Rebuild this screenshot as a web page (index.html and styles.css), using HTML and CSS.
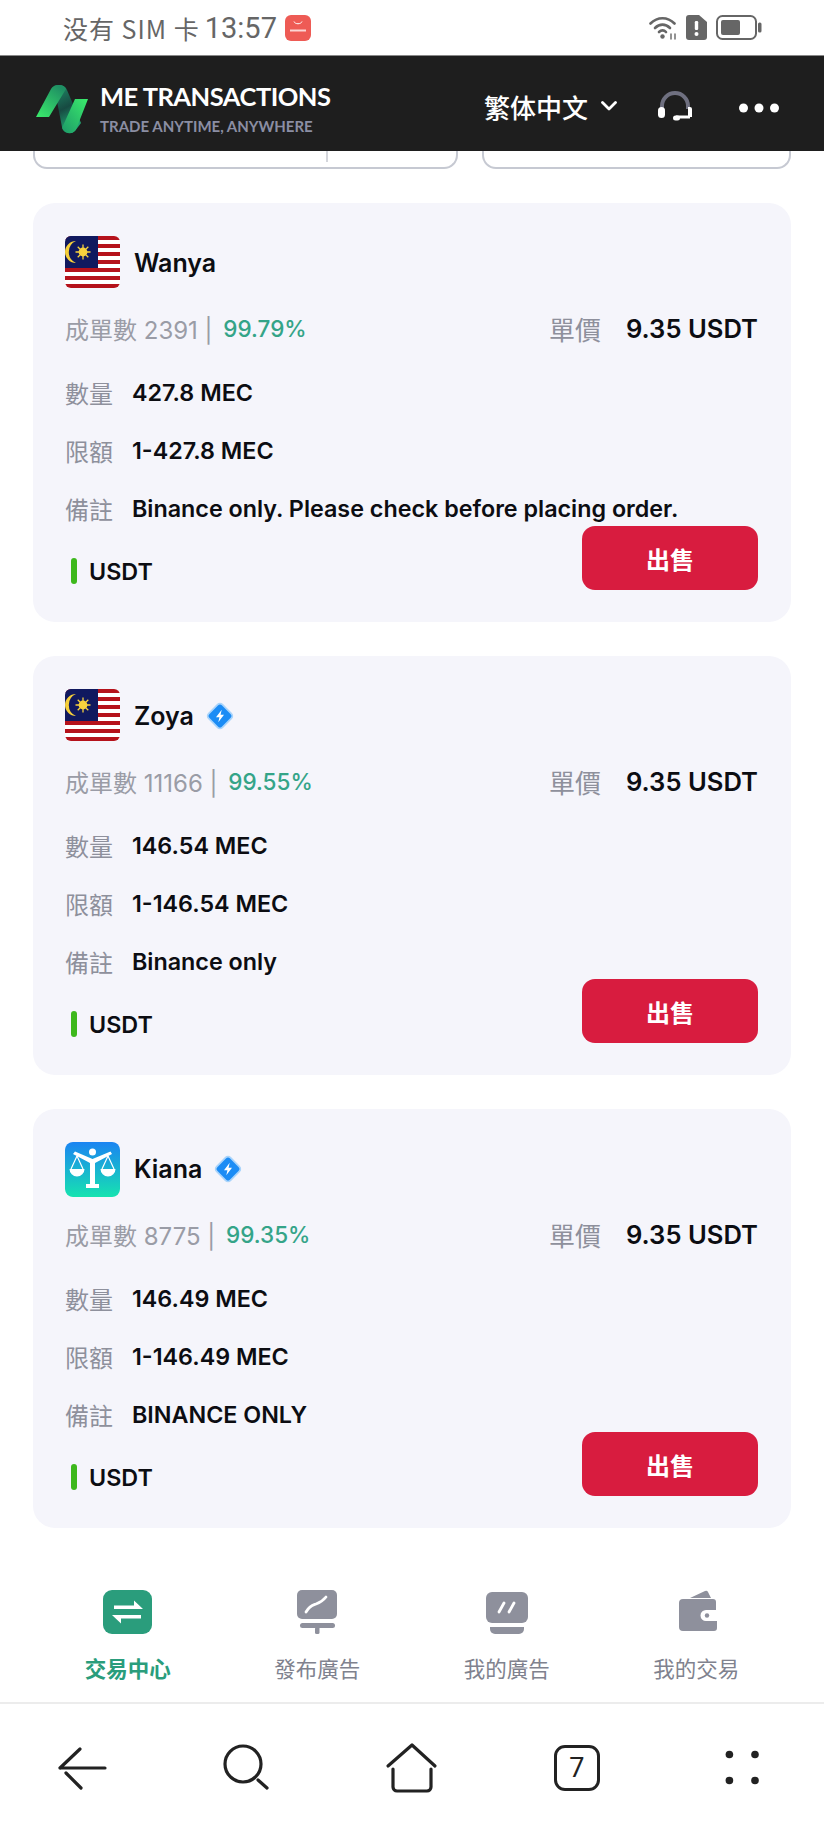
FILE: index.html
```html
<!DOCTYPE html>
<html lang="zh-Hant">
<head>
  <meta charset="UTF-8" />
  <meta name="viewport" content="width=device-width, initial-scale=1" />
  <title>ME Transactions</title>
  <link rel="stylesheet" href="styles.css">
</head>
<body>

  <!-- shared flag + badge -->
  <svg class="defs" aria-hidden="true">
    <symbol id="flag-my" viewBox="0 0 55 52">
      <rect width="55" height="52" fill="#fff"/>
      <g fill="#b5121b">
        <rect y="0" width="55" height="4"/>
        <rect y="8" width="55" height="4"/>
        <rect y="16" width="55" height="4"/>
        <rect y="24" width="55" height="4"/>
        <rect y="32" width="55" height="4"/>
        <rect y="40" width="55" height="4"/>
        <rect y="48" width="55" height="4"/>
      </g>
      <rect width="33" height="32" fill="#10195f"/>
      <path d="M11 5a11 11 0 1 0 0 22 12 12 0 0 1 0-22z" fill="#f5cf3a"/>
      <circle cx="18" cy="16" r="4.400" fill="#f7d23e"/>
      <path d="M18 8.500v15M10.500 16h15M12.700 10.700l10.600 10.600M23.300 10.700 12.700 21.300" stroke="#f7d23e" stroke-width="1.300"/>
    </symbol>
    <symbol id="badge" viewBox="0 0 28 28">
      <rect x="5.500" y="5.500" width="17" height="17" rx="3" transform="rotate(45 14 14)" fill="#1b8cf5" stroke="#a9d4fb" stroke-width="1.500"/>
      <path d="M15.500 8.500 10.500 15h3l-1 4.500 5-6.500h-3z" fill="#fff"/>
    </symbol>
  </svg>

  <div class="phone-status">
    <div class="status-left">
      <span class="carrier">没有 SIM 卡</span>
      <span class="clock">13:57</span>
      <svg class="store-icon" width="26" height="26" viewBox="0 0 26 26">
        <rect width="26" height="26" rx="6" fill="#ee5b55"/>
        <path d="M9 6.500c1 3 7 3 8 0" fill="none" stroke="#fff" stroke-width="1"/>
        <rect x="5" y="14.500" width="16" height="2" fill="#fbd5d3"/>
      </svg>
    </div>
    <div class="status-right">
      <svg width="28" height="26" viewBox="0 0 28 26" fill="none" stroke="#666" stroke-linecap="round">
        <path d="M1.500 8.500c7-7 17-7 24 0" stroke-width="2.600"/>
        <path d="M6 13c4.500-4.500 10.500-4.500 15 0" stroke-width="2.600"/>
        <path d="M10 17c2.200-2.200 5-2.200 7 0" stroke-width="2.600"/>
        <circle cx="13.500" cy="21.500" r="2.200" fill="#666" stroke="none"/>
        <path d="M22 19v5M26 19v5" stroke-width="1.400"/>
      </svg>
      <svg width="21" height="25" viewBox="0 0 21 25">
        <path d="M3 0h10l8 7v15a3 3 0 0 1-3 3H3a3 3 0 0 1-3-3V3a3 3 0 0 1 3-3z" fill="#666"/>
        <rect x="8.800" y="6" width="3.400" height="9" rx="1.200" fill="#fff"/>
        <circle cx="10.500" cy="19" r="2" fill="#fff"/>
      </svg>
      <svg width="46" height="25" viewBox="0 0 46 25">
        <rect x="1" y="1" width="39" height="23" rx="5.500" fill="none" stroke="#666" stroke-width="2"/>
        <rect x="5" y="5" width="19" height="15" rx="2" fill="#666"/>
        <rect x="42" y="7.500" width="3.500" height="10" rx="1.500" fill="#666"/>
      </svg>
    </div>
  </div>

  <header class="top-bar">
    <div class="brand">
      <svg width="52" height="50" viewBox="0 0 52 50">
        <defs>
          <linearGradient id="lg-a" x1="0" y1="1" x2="0.700" y2="0">
            <stop offset="0" stop-color="#3bec6c"/>
            <stop offset="1" stop-color="#1f8f63"/>
          </linearGradient>
          <linearGradient id="lg-b" x1="0" y1="0" x2="0.300" y2="1">
            <stop offset="0" stop-color="#1f8f68"/>
            <stop offset="0.550" stop-color="#174a42"/>
            <stop offset="1" stop-color="#22a873"/>
          </linearGradient>
          <linearGradient id="lg-c" x1="1" y1="0" x2="0" y2="1">
            <stop offset="0" stop-color="#3bec6c"/>
            <stop offset="1" stop-color="#1d9a68"/>
          </linearGradient>
        </defs>
        <path d="M18 2q2-1 5-1 6 0 8 5l14 33-6 8q-3 3-7 2-4-1-6-6z" fill="url(#lg-b)"/>
        <path d="M0 33 15 5q2-4 8-4 5 0 7 4L13 33z" fill="url(#lg-a)"/>
        <path d="M52 15 41 43q-2 6-8 6-4 0-6-3l-1-2 13-29z" fill="url(#lg-c)"/>
      </svg>
      <div class="brand-text">
        <div class="brand-name">ME TRANSACTIONS</div>
        <div class="brand-sub">TRADE ANYTIME, ANYWHERE</div>
      </div>
    </div>
    <div class="top-actions">
      <span class="lang">繁体中文</span>
      <svg class="chevron" width="16" height="10" viewBox="0 0 16 10" fill="none" stroke="#fff" stroke-width="2.800" stroke-linecap="round" stroke-linejoin="round"><path d="M1.500 1.500 8 8l6.500-6.500"/></svg>
      <svg class="headset" width="34" height="30" viewBox="0 0 34 30" fill="none">
        <path d="M4 18V15a13 13 0 0 1 26 0v3" stroke="#6f7080" stroke-width="4"/>
        <rect x="0" y="16" width="7" height="11" rx="3.500" fill="#fff"/>
        <path d="M30 16h2a2 2 0 0 1 2 2v8H30z" fill="#fff"/>
        <path d="M32 26H18" stroke="#fff" stroke-width="3"/>
        <rect x="15" y="24.500" width="7" height="5" rx="2.500" fill="#fff"/>
      </svg>
      <svg class="more" width="40" height="10" viewBox="0 0 40 10" fill="#fff">
        <circle cx="4.500" cy="5" r="4.500"/>
        <circle cx="20" cy="5" r="4.500"/>
        <circle cx="35.500" cy="5" r="4.500"/>
      </svg>
    </div>
  </header>

  <main class="content">
    <div class="peek-row">
      <div class="peek peek-left"><span class="peek-split"></span></div>
      <div class="peek peek-right"></div>
    </div>

    <section class="card">
      <div class="seller">
        <svg class="avatar"><use href="#flag-my"/></svg>
        <span class="seller-name">Wanya</span>
      </div>
      <div class="stats">
        <div class="orders">成單數 2391 | <span class="rate">99.79%</span></div>
        <div class="price"><span class="price-label">單價</span><b>9.35 USDT</b></div>
      </div>
      <div class="row row-first"><span class="row-label">數量</span><b>427.8 MEC</b></div>
      <div class="row"><span class="row-label">限額</span><b>1-427.8 MEC</b></div>
      <div class="row"><span class="row-label">備註</span><b>Binance only. Please check before placing order.</b></div>
      <div class="card-foot">
        <div class="pay"><i class="pay-mark"></i>USDT</div>
        <button class="sell-btn">出售</button>
      </div>
    </section>

    <section class="card">
      <div class="seller">
        <svg class="avatar"><use href="#flag-my"/></svg>
        <span class="seller-name">Zoya</span>
        <svg class="badge"><use href="#badge"/></svg>
      </div>
      <div class="stats">
        <div class="orders">成單數 11166 | <span class="rate">99.55%</span></div>
        <div class="price"><span class="price-label">單價</span><b>9.35 USDT</b></div>
      </div>
      <div class="row row-first"><span class="row-label">數量</span><b>146.54 MEC</b></div>
      <div class="row"><span class="row-label">限額</span><b>1-146.54 MEC</b></div>
      <div class="row"><span class="row-label">備註</span><b>Binance only</b></div>
      <div class="card-foot">
        <div class="pay"><i class="pay-mark"></i>USDT</div>
        <button class="sell-btn">出售</button>
      </div>
    </section>

    <section class="card">
      <div class="seller">
        <svg class="avatar avatar-square" viewBox="0 0 55 55">
          <defs>
            <linearGradient id="kiana-bg" x1="0" y1="0" x2="0" y2="1">
              <stop offset="0" stop-color="#1b84f2"/>
              <stop offset="1" stop-color="#16e3b0"/>
            </linearGradient>
          </defs>
          <rect width="55" height="55" rx="8" fill="url(#kiana-bg)"/>
          <circle cx="27.500" cy="10" r="3.500" fill="#fff"/>
          <path d="M8 12 25 21v21h-4v4h13v-4h-4V21l17-9-1.500-2.500L27.500 17 10 9.500z" fill="#fff"/>
          <path d="M12 14 6 27M12 14l6 13M43 14l-6 13M43 14l6 13" stroke="#fff" stroke-width="1.200" fill="none"/>
          <path d="M4.500 27h15a7.500 7.500 0 0 1-15 0zM35.500 27h15a7.500 7.500 0 0 1-15 0z" fill="#fff"/>
        </svg>
        <span class="seller-name">Kiana</span>
        <svg class="badge"><use href="#badge"/></svg>
      </div>
      <div class="stats">
        <div class="orders">成單數 8775 | <span class="rate">99.35%</span></div>
        <div class="price"><span class="price-label">單價</span><b>9.35 USDT</b></div>
      </div>
      <div class="row row-first"><span class="row-label">數量</span><b>146.49 MEC</b></div>
      <div class="row"><span class="row-label">限額</span><b>1-146.49 MEC</b></div>
      <div class="row"><span class="row-label">備註</span><b>BINANCE ONLY</b></div>
      <div class="card-foot">
        <div class="pay"><i class="pay-mark"></i>USDT</div>
        <button class="sell-btn">出售</button>
      </div>
    </section>
  </main>

  <nav class="tabs">
    <a class="tab tab-active">
      <svg width="60" height="46" viewBox="0 0 60 46">
        <rect x="5" y="0" width="49" height="44" rx="9" fill="#2a9d7c"/>
        <path d="M16 15.500h20v-5l9 8.500H16zM43 28.500H23v5l-9-8.500h29z" fill="#fff"/>
      </svg>
      <span>交易中心</span>
    </a>
    <a class="tab">
      <svg width="60" height="46" viewBox="0 0 60 46">
        <rect x="10" y="0" width="40" height="29" rx="5" fill="#8e909c"/>
        <path d="M19 22c4-7 7-7 10-8s6-2 10-7" fill="none" stroke="#fff" stroke-width="2.800" stroke-linecap="round"/>
        <rect x="13" y="33" width="35" height="5" rx="2.500" fill="#8e909c"/>
        <rect x="28" y="37" width="4.500" height="7" rx="1.500" fill="#8e909c"/>
      </svg>
      <span>發布廣告</span>
    </a>
    <a class="tab">
      <svg width="60" height="46" viewBox="0 0 60 46">
        <rect x="9" y="2" width="42" height="31" rx="6" fill="#8e909c"/>
        <path d="M22 22l5-9M32 22l5-9" stroke="#fff" stroke-width="2.800" stroke-linecap="round"/>
        <path d="M13 37h34v2a5 5 0 0 1-5 5H18a5 5 0 0 1-5-5z" fill="#8e909c"/>
      </svg>
      <span>我的廣告</span>
    </a>
    <a class="tab">
      <svg width="60" height="46" viewBox="0 0 60 46">
        <path d="M24 8 39 1q2-1 3 1l3 6z" fill="#8e909c"/>
        <path d="M17 9h30a3 3 0 0 1 3 3v8H40a5.500 5.500 0 0 0 0 11h11v7a3 3 0 0 1-3 3H17a4 4 0 0 1-4-4V13a4 4 0 0 1 4-4z" fill="#8e909c"/>
        <circle cx="41" cy="25.500" r="2.200" fill="#8e909c"/>
      </svg>
      <span>我的交易</span>
    </a>
  </nav>

  <div class="browser-bar">
    <div class="browser-btn">
      <svg width="56" height="56" viewBox="0 0 56 56" fill="none" stroke="#222" stroke-width="3.200" stroke-linecap="round">
        <path d="M6 28h45M6 28 26 9M12 33l15 15"/>
      </svg>
    </div>
    <div class="browser-btn">
      <svg width="56" height="56" viewBox="0 0 56 56" fill="none" stroke="#222" stroke-width="3.200" stroke-linecap="round">
        <circle cx="24" cy="24" r="18"/>
        <path d="M39 40l9 8"/>
      </svg>
    </div>
    <div class="browser-btn">
      <svg width="56" height="56" viewBox="0 0 56 56" fill="none" stroke="#222" stroke-width="3.200" stroke-linecap="round" stroke-linejoin="round">
        <path d="M4 26 28 5l23 21"/>
        <path d="M9 29v18a4 4 0 0 0 4 4h30a4 4 0 0 0 4-4V29"/>
      </svg>
    </div>
    <div class="browser-btn"><div class="tab-count">7</div></div>
    <div class="browser-btn">
      <svg width="56" height="56" viewBox="0 0 56 56" fill="#222">
        <circle cx="15.400" cy="14.500" r="3.800"/>
        <circle cx="41" cy="14.500" r="3.800"/>
        <circle cx="15.400" cy="40.500" r="3.800"/>
        <circle cx="41" cy="40.500" r="3.800"/>
      </svg>
    </div>
  </div>

</body>
</html>
```

FILE: styles.css
```css
/* Baseline */
* {
  margin: 0;
  padding: 0;
  box-sizing: border-box;
}
body {
  width: 824px;
  height: 1831px;
  overflow: hidden;
  display: flex;
  flex-direction: column;
  background: #fff;
  color: #0c0d12;
  font-family: Inter, "Noto Sans CJK TC", sans-serif;
}
.defs {
  position: absolute;
  width: 0;
  height: 0;
}

/* Phone status bar */
.phone-status {
  height: 55px;
  flex: none;
  display: flex;
  justify-content: space-between;
  align-items: center;
  padding: 0 62px 0 63px;
  color: #666;
}
.status-left,
.status-right {
  display: flex;
  align-items: center;
}
.status-right {
  gap: 9px;
}
.carrier {
  font-family: "Noto Sans CJK SC", sans-serif;
  font-size: 25px;
  letter-spacing: 1px;
}
.clock {
  font-family: Roboto, sans-serif;
  font-size: 29px;
  margin-left: 5px;
}
.store-icon {
  margin-left: 8px;
}

/* Dark header */
.top-bar {
  height: 96px;
  flex: none;
  display: flex;
  justify-content: space-between;
  align-items: center;
  padding: 5px 45px 0 36px;
  background: #1e1e1e;
  border-top: 1px solid #888;
}
.brand {
  display: flex;
  align-items: center;
  gap: 12px;
  margin-top: 5px;
}
.brand-name {
  color: #fff;
  font-family: Lato, sans-serif;
  font-size: 25.500px;
  font-weight: 700;
  letter-spacing: -0.500px;
  line-height: 30px;
}
.brand-sub {
  color: #8b8ea3;
  font-family: Lato, sans-serif;
  font-size: 15px;
  font-weight: 700;
  line-height: 20px;
  margin-top: 5px;
}
.top-actions {
  display: flex;
  align-items: center;
}
.lang {
  color: #fff;
  font-family: "Noto Sans CJK TC", sans-serif;
  font-size: 26px;
  font-weight: 500;
}
.chevron {
  margin-left: 13px;
}
.headset {
  margin-left: 41px;
}
.more {
  margin-left: 47px;
  margin-top: 3px;
}

/* Scrolling list */
.content {
  flex: 1;
  overflow: hidden;
  padding: 0 33px;
}
.peek-row {
  display: flex;
  gap: 24px;
  margin-bottom: 34px;
}
.peek {
  height: 18px;
  border: 2px solid #c6c9d2;
  border-top: none;
  border-radius: 0 0 14px 14px;
  position: relative;
}
.peek-left {
  width: 425px;
}
.peek-right {
  flex: 1;
}
.peek-split {
  position: absolute;
  left: 291px;
  top: 0;
  width: 2px;
  height: 11px;
  background: #d4d6dc;
}

/* Offer card */
.card {
  height: 419px;
  margin-bottom: 34px;
  padding: 33px 33px 32px 32px;
  background: #f5f5fb;
  border-radius: 22px;
}
.seller {
  height: 52px;
  display: flex;
  align-items: center;
}
.avatar {
  width: 55px;
  height: 52px;
  border-radius: 6px;
  flex: none;
}
.avatar-square {
  height: 55px;
  align-self: flex-start;
}
.seller-name {
  margin-left: 14px;
  margin-top: 2px;
  font-size: 25px;
  font-weight: 600;
}
.badge {
  width: 32px;
  height: 32px;
  margin-left: 10px;
  margin-top: 2px;
}
.stats {
  margin-top: 24px;
  height: 32px;
  display: flex;
  justify-content: space-between;
  align-items: center;
}
.orders {
  font-size: 24px;
  color: #9a9ca6;
}
.rate {
  color: #34a488;
  font-weight: 500;
  font-size: 22.500px;
  position: relative;
  top: -2px;
  margin-left: 4px;
}
.price {
  display: flex;
  align-items: center;
}
.price-label {
  font-size: 26px;
  color: #8e909c;
  margin-right: 25px;
}
.price b {
  font-size: 25.600px;
  font-weight: 600;
}
.row {
  height: 32px;
  margin-top: 26px;
  display: flex;
  align-items: center;
  font-size: 23.300px;
}
.row b {
  font-weight: 600;
}
.row-first {
  margin-top: 32px;
}
.row-label {
  width: 67px;
  flex: none;
  color: #8e909c;
  font-size: 24px;
}
.card-foot {
  display: flex;
  justify-content: space-between;
  align-items: flex-end;
  margin-top: 2px;
}
.pay {
  display: flex;
  align-items: center;
  height: 32px;
  margin-bottom: 3px;
  padding-left: 6px;
  font-size: 23.300px;
  font-weight: 600;
}
.pay-mark {
  width: 6px;
  height: 26px;
  border-radius: 3px;
  background: #3db81c;
  margin-right: 12px;
}
.sell-btn {
  width: 176px;
  height: 64px;
  border: none;
  border-radius: 13px;
  background: #d81c3f;
  color: #fff;
  font-family: "Noto Sans CJK TC", sans-serif;
  font-size: 24px;
  font-weight: 700;
}

/* Bottom tabs */
.tabs {
  flex: none;
  display: grid;
  grid-template-columns: repeat(4, 1fr);
  padding: 0 33px 19px;
}
.tab {
  display: flex;
  flex-direction: column;
  align-items: center;
  color: #80828e;
  font-size: 21.500px;
}
.tab span {
  margin-top: 19px;
  line-height: 28px;
}
.tab svg {
  display: block;
}
.tab-active {
  color: #2a9d7c;
  font-weight: 700;
}

/* Browser toolbar */
.browser-bar {
  height: 129px;
  flex: none;
  display: flex;
  border-top: 2px solid #ececec;
}
.browser-btn {
  flex: 1;
  display: flex;
  justify-content: center;
  align-items: center;
}
.tab-count {
  width: 46px;
  height: 46px;
  border: 3.500px solid #222;
  border-radius: 11px;
  display: flex;
  justify-content: center;
  align-items: center;
  font-family: Roboto, sans-serif;
  font-size: 27px;
  color: #222;
}
```
